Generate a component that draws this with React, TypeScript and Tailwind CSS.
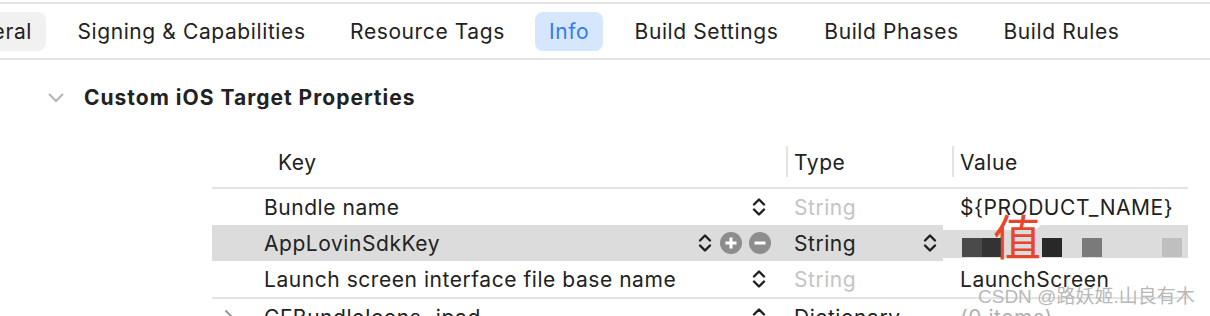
import React from "react";

type Tab = { title: string; cls: string };

const tabs: Tab[] = [
  { title: "General", cls: "w-[120px] -ml-[74px] justify-end pr-[14px] bg-[#f1f1f1]" },
  { title: "Signing & Capabilities", cls: "w-[257px] justify-center" },
  { title: "Resource Tags", cls: "w-[181px] justify-center" },
  { title: "Info", cls: "w-[68px] justify-center bg-[#d6e6fd] text-[#2f7cf6]" },
  { title: "Build Settings", cls: "w-[173px] justify-center" },
  { title: "Build Phases", cls: "w-[163px] justify-center" },
  { title: "Build Rules", cls: "w-[143px] justify-center" },
];

type Row = {
  key: string;
  type: string;
  value: string;
  typeMuted?: boolean;
  valueMuted?: boolean;
  selected?: boolean;
  disclosure?: boolean;
  divider?: boolean;
};

const rows: Row[] = [
  { key: "Bundle name", type: "String", typeMuted: true, value: "${PRODUCT_NAME}" },
  { key: "AppLovinSdkKey", type: "String", selected: true, value: "" },
  {
    key: "Launch screen interface file base name",
    type: "String",
    typeMuted: true,
    value: "LaunchScreen",
  },
  {
    key: "CFBundleIcons~ipad",
    type: "Dictionary",
    value: "(0 items)",
    valueMuted: true,
    disclosure: true,
    divider: true,
  },
];

function Stepper() {
  return (
    <svg width="16" height="22" viewBox="0 0 16 22" fill="none">
      <path
        d="M3 8.5 L8 3.5 L13 8.5 M3 13.5 L8 18.5 L13 13.5"
        stroke="#1f1f1f"
        strokeWidth="2.4"
        strokeLinecap="round"
        strokeLinejoin="round"
      />
    </svg>
  );
}

function RoundButton({ minus }: { minus?: boolean }) {
  return (
    <svg width="22" height="22" viewBox="0 0 22 22">
      <circle cx="11" cy="11" r="11" fill="#8d8d8d" />
      <path
        d={minus ? "M5.5 11 H16.5" : "M5.5 11 H16.5 M11 5.5 V16.5"}
        stroke="#ffffff"
        strokeWidth="3"
      />
    </svg>
  );
}

export default function App() {
  return (
    <div className="relative w-[1210px] h-[316px] overflow-hidden bg-white text-[#222222] font-['Inter','Noto_Sans_CJK_SC',sans-serif]">
      {/* TAB BAR */}
      <div className="mt-[2px] h-[58px] border-y-2 border-[#e3e3e3] flex items-center gap-[17px] text-[21px] tracking-[0.6px]">
        {tabs.map((tab, i) => (
          <div key={i} className={`h-[39px] pt-[2px] rounded-[8px] flex items-center shrink-0 ${tab.cls}`}>
            {tab.title}
          </div>
        ))}
      </div>

      {/* SECTION HEADER */}
      <div className="mt-[20px] h-[36px] pl-[48px] flex items-center">
        <svg width="16" height="10" viewBox="0 0 16 10" fill="none">
          <path d="M1.5 1.5 L8 8 L14.5 1.5" stroke="#b5b5b5" strokeWidth="2" strokeLinecap="round" />
        </svg>
        <span className="ml-[20px] text-[21px] tracking-[1px] font-bold">
          Custom iOS Target Properties
        </span>
      </div>

      {/* TABLE */}
      <div className="ml-[212px] w-[976px] mt-[30px] text-[21px] tracking-[0.55px]">
        <div className="h-[43px] border-b-2 border-[#e4e4e4] flex items-start">
          <div className="w-[574px] pl-[66px] leading-[33px]">Key</div>
          <div className="w-[166px] flex">
            <div className="w-[2px] h-[31px] bg-[#e3e3e3]" />
            <span className="pl-[6px] leading-[33px]">Type</span>
          </div>
          <div className="flex-1 flex">
            <div className="w-[2px] h-[31px] bg-[#e3e3e3]" />
            <span className="pl-[6px] leading-[33px]">Value</span>
          </div>
        </div>

        {rows.map((row, i) => (
          <div
            key={i}
            className={`flex items-center ${
              row.divider ? "border-t-2 border-[#e4e4e4] h-[38px]" : "h-[36px]"
            } ${row.selected ? "bg-[#dcdcdc]" : ""}`}
          >
            {/* KEY */}
            <div className="w-[574px] h-full flex items-center">
              <div className="w-[52px] pl-[12px] flex items-center">
                {row.disclosure && (
                  <svg width="10" height="16" viewBox="0 0 10 16" fill="none">
                    <path d="M2 2 L8 8 L2 14" stroke="#9a9a9a" strokeWidth="2" strokeLinecap="round" />
                  </svg>
                )}
              </div>
              <span className="flex-1 pt-[2px] whitespace-nowrap">{row.key}</span>
              {row.selected ? (
                <div className="flex items-center gap-[7px] pr-[15px]">
                  <Stepper />
                  <RoundButton />
                  <RoundButton minus />
                </div>
              ) : (
                <div className="pr-[19px] flex items-center">
                  <Stepper />
                </div>
              )}
            </div>

            {/* TYPE */}
            <div className="w-[166px] h-full flex items-center">
              <span className={`flex-1 pt-[2px] pl-[8px] ${row.typeMuted ? "text-[#c4c4c4]" : ""}`}>
                {row.type}
              </span>
              {row.selected && (
                <div className="pr-[14px] flex items-center">
                  <Stepper />
                </div>
              )}
            </div>

            {/* VALUE */}
            <div className="relative flex-1 h-full flex items-center">
              <span className={`pl-[8px] pt-[2px] whitespace-nowrap ${row.valueMuted ? "text-[#b0b0b0]" : ""}`}>
                {row.value}
              </span>
              {row.selected && (
                <>
                  <div className="absolute left-[-9px] top-[-7px] w-[100px] h-[12px] bg-white rounded-tl-[10px] rounded-br-[40px]" />
                  <div className="absolute left-[-9px] bottom-0 w-[245px] h-[3px] bg-white" />
                  <div className="absolute left-[10px] top-[13px] w-[20px] h-[19px] bg-[#4a4a4a]" />
                  <div className="absolute left-[30px] top-[13px] w-[20px] h-[19px] bg-[#333333]" />
                  <div className="absolute left-[90px] top-[13px] w-[20px] h-[19px] bg-[#282828]" />
                  <div className="absolute left-[130px] top-[13px] w-[20px] h-[19px] bg-[#7a7a7a]" />
                  <div className="absolute left-[210px] top-[13px] w-[20px] h-[19px] bg-[#bfbfbf]" />
                  <span className="absolute left-[41px] top-[-15px] text-[48px] leading-none tracking-normal text-[#e8452f] font-['Noto_Sans_CJK_SC',sans-serif]">
                    值
                  </span>
                </>
              )}
            </div>
          </div>
        ))}
      </div>

      {/* WATERMARK */}
      <div className="absolute left-[978px] top-[286px] text-[19px] leading-[22px] text-[#b8b8b8] whitespace-nowrap font-['Liberation_Sans','Noto_Sans_CJK_SC',sans-serif]">
        CSDN @路妖姬.山良有木
      </div>
    </div>
  );
}
